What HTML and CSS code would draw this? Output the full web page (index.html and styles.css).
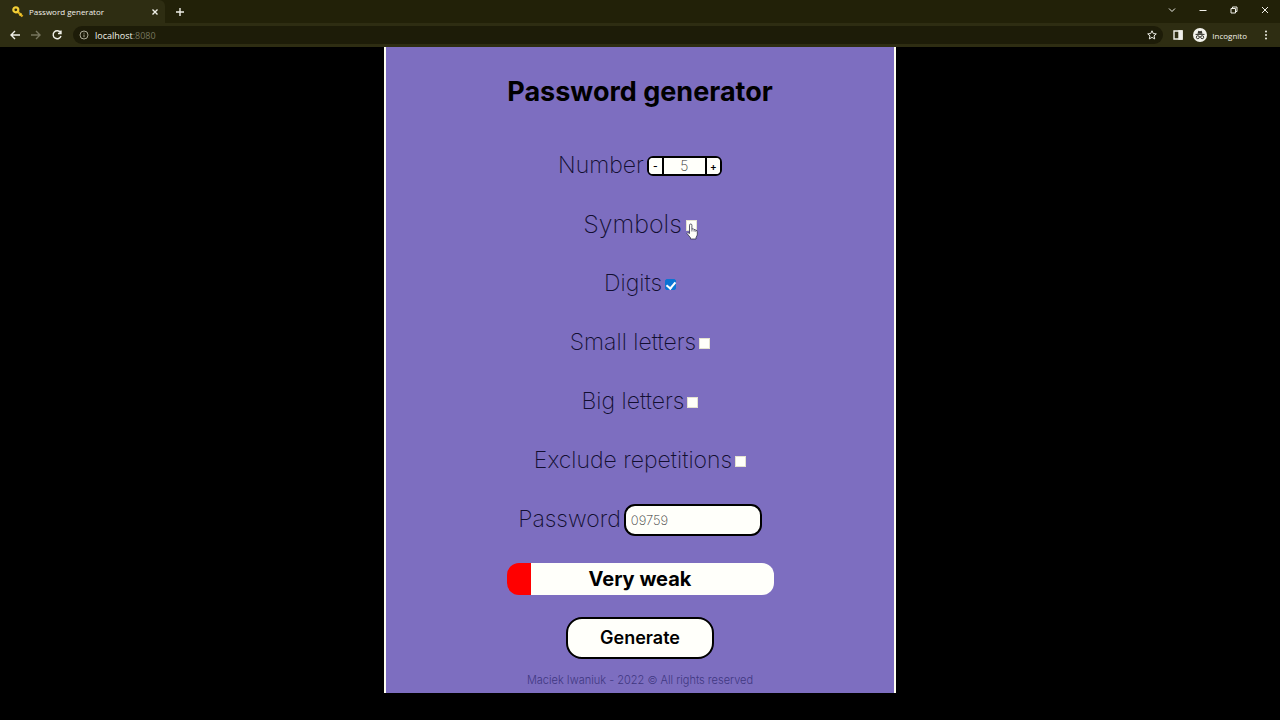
FILE: index.html
```html
<!DOCTYPE html>
<html lang="en">
<head>
<meta charset="utf-8">
<title>Password generator</title>
<link rel="stylesheet" href="styles.css">
</head>
<body>
<header class="browser">
  <div class="tab-strip">
    <div class="tab">
      <svg class="key" viewBox="0 0 14 14" width="14" height="14" aria-hidden="true"><path d="M6 6l5.500 5.500" stroke="#d9a91c" stroke-width="2.4"/><path d="M8.500 10.500l2-2" stroke="#f3d338" stroke-width="1.2"/><circle cx="4.800" cy="4.800" r="2.500" fill="none" stroke="#f3cf36" stroke-width="2.200"/></svg>
      <span class="tab-title">Password generator</span>
      <button class="icon-button" type="button" aria-label="Close tab"><svg viewBox="0 0 10 10" width="10" height="10"><path d="M2.500 2.500l5 5M7.500 2.500l-5 5"/></svg></button>
    </div>
    <button class="icon-button new-tab" type="button" aria-label="New tab"><svg viewBox="0 0 10 10" width="10" height="10"><path d="M5 1v8M1 5h8"/></svg></button>
    <div class="window-controls">
      <button class="icon-button dim" type="button" aria-label="Search tabs"><svg viewBox="0 0 10 10" width="10" height="10"><path d="M2 3.500l3 3 3-3"/></svg></button>
      <button class="icon-button thin" type="button" aria-label="Minimize"><svg viewBox="0 0 10 10" width="10" height="10"><path d="M1.500 5.500h7"/></svg></button>
      <button class="icon-button thin" type="button" aria-label="Restore"><svg viewBox="0 0 10 10" width="10" height="10"><path d="M2 3.500h4.500V8H2zM3.500 3.500V2H8v4.500H6.500"/></svg></button>
      <button class="icon-button thin" type="button" aria-label="Close"><svg viewBox="0 0 10 10" width="10" height="10"><path d="M2 2l6 6M8 2L2 8"/></svg></button>
    </div>
  </div>
  <div class="toolbar">
    <button class="icon-button" type="button" aria-label="Back"><svg viewBox="0 0 12 12" width="12" height="12"><path d="M11 6H2M6 2L2 6l4 4"/></svg></button>
    <button class="icon-button faded" type="button" aria-label="Forward"><svg viewBox="0 0 12 12" width="12" height="12"><path d="M1 6h9M6 2l4 4-4 4"/></svg></button>
    <button class="icon-button" type="button" aria-label="Reload"><svg viewBox="0 0 12 12" width="12" height="12"><path d="M9.500 3.500A4 4 0 1 0 10 7M10 1.500v3H7"/></svg></button>
    <div class="address">
      <svg class="info" viewBox="0 0 10 10" width="10" height="10" aria-hidden="true"><circle cx="5" cy="5" r="4"/><path d="M5 4.500v2.700M5 2.700v1"/></svg>
      <span class="url">localhost<span class="port">:8080</span></span>
      <button class="icon-button star" type="button" aria-label="Bookmark"><svg viewBox="0 0 12 12" width="12" height="12"><path d="M6 1.800l1.300 2.800 3 .3-2.300 2 .7 3L6 8.400 3.300 9.900l.7-3-2.300-2 3-.3z"/></svg></button>
    </div>
    <button class="icon-button" type="button" aria-label="Side panel"><svg viewBox="0 0 12 12" width="12" height="12"><path d="M2 2h8v8H2z"/><path d="M7 2h3v8H7z" fill="#eee"/></svg></button>
    <div class="profile">
      <svg viewBox="0 0 14 14" width="14" height="14" aria-hidden="true"><circle cx="7" cy="7" r="7" fill="#f4f4ee"/><path d="M4.500 5.800l.8-3 1.700.4 1.700-.4.8 3z" fill="#34342c"/><path d="M2.500 6.400h9" stroke="#34342c"/><g fill="none" stroke="#34342c"><circle cx="4.800" cy="9.200" r="1.500"/><circle cx="9.200" cy="9.200" r="1.500"/><path d="M6.300 9q.7-.5 1.400 0"/></g></svg>
      <span>Incognito</span>
    </div>
    <button class="icon-button" type="button" aria-label="Menu"><svg viewBox="0 0 10 10" width="10" height="10"><g class="dots"><circle cx="5" cy="1.500" r="1"/><circle cx="5" cy="5" r="1"/><circle cx="5" cy="8.500" r="1"/></g></svg></button>
  </div>
</header>
<main class="panel">
  <h1 class="title">Password generator</h1>
  <form class="form">
    <div class="row">
      <label for="number">Number</label>
      <div class="stepper">
        <button type="button" aria-label="Decrease">-</button>
        <input id="number" type="text" inputmode="numeric" value="5">
        <button type="button" aria-label="Increase">+</button>
      </div>
    </div>
    <div class="row hovered">
      <label for="symbols">Symbols</label>
      <span class="check-wrap"><input class="check" id="symbols" type="checkbox">
        <svg class="pointer" viewBox="0 0 12 17" width="12" height="17" aria-hidden="true"><path d="M3.500 9V2.200a1.200 1.200 0 0 1 2.400 0V6q1.800-.8 2.200.6 1.400-.5 1.700.7 1.500-.2 1.500 1.200V12l-1.300 2.600V16H4.500v-1.200L1 10.500q.3-2 2.500 0z" fill="#fffffa" stroke="#34344a" stroke-width=".8"/><path d="M5.900 6v2.500M8.100 6.600v2M9.800 7.300v1.500" stroke="#34344a" stroke-width=".7"/></svg>
      </span>
    </div>
    <div class="row"><label for="digits">Digits</label><input class="check" id="digits" type="checkbox" checked></div>
    <div class="row"><label for="small">Small letters</label><input class="check" id="small" type="checkbox"></div>
    <div class="row"><label for="big">Big letters</label><input class="check" id="big" type="checkbox"></div>
    <div class="row"><label for="exclude">Exclude repetitions</label><input class="check" id="exclude" type="checkbox"></div>
    <div class="row"><label for="password">Password</label><input class="password" id="password" type="text" value="09759"></div>
    <div class="row"><div class="strength">Very weak</div></div>
    <div class="row"><button class="generate" type="button">Generate</button></div>
  </form>
  <footer class="footer">Maciek Iwaniuk - 2022 © All rights reserved</footer>
</main>
</body>
</html>
```
FILE: styles.css
```css
* { box-sizing: border-box; }
body {
  margin: 0;
  background: #000;
  color: #000;
  font-family: Inter, "Open Sans", sans-serif;
}
button, input { font-family: inherit; }

.browser {
  background: #2e2d12;
  color: #f2f2ea;
  font-family: "Open Sans", sans-serif;
  font-size: 8px;
}
.tab-strip { display: flex; align-items: center; height: 23px; background: #222108; }
.tab {
  display: flex;
  align-items: center;
  gap: 4px;
  width: 165px;
  height: 23px;
  padding: 0 5px 0 11px;
  background: #2e2d12;
  border-radius: 0 6px 0 0;
}
.tab-title { flex: 1; }
.icon-button {
  display: flex;
  align-items: center;
  justify-content: center;
  padding: 0;
  border: 0;
  background: none;
}
.icon-button svg, .info { fill: none; stroke: #f0f0e8; stroke-width: 1.4; }
.icon-button .dots { fill: #f0f0e8; stroke: none; }
.thin svg, .dim svg, .star svg, .info { stroke-width: 1; }
.faded svg { stroke: #77765e; }
.icon-button.star svg, .icon-button.thin svg, .icon-button.dim svg { stroke-width: 1; }
.info { stroke: #aaa996; }
.new-tab { margin-left: 10px; }
.window-controls { display: flex; gap: 21px; margin-left: auto; padding: 0 10px 4px 0; }
.toolbar { display: flex; align-items: center; gap: 9px; height: 24px; padding: 0 9px 0 9px; }
.address {
  display: flex;
  flex: 1;
  align-items: center;
  gap: 6px;
  height: 18px;
  margin-left: 1px;
  padding: 0 5px 0 6px;
  border-radius: 9px;
  background: #1d1c08;
  font-size: 9px;
}
.port { color: #77765e; }
.star { margin-left: auto; }
.profile { display: flex; align-items: center; gap: 5px; padding-right: 5px; }

.panel {
  display: flex;
  flex-direction: column;
  align-items: center;
  width: 40%;
  margin: 0 auto;
  padding-bottom: 5px;
  border: solid #fffff0;
  border-width: 0 2px;
  background: #7d6ec0;
}
.title { margin: 28px 0 27px; font-size: 27px; line-height: 34px; font-weight: 700; }
.form { display: flex; flex-direction: column; align-items: center; align-self: stretch; }
.row {
  display: flex;
  align-items: center;
  justify-content: center;
  gap: 3px;
  width: 100%;
  height: 59px;
  color: #120e30;
  font-size: 23px;
  font-weight: 200;
}
.row label { padding-bottom: 1px; }
.hovered { gap: 4px; font-size: 25px; }
.stepper {
  display: flex;
  height: 20px;
  border: 2px solid #000;
  border-radius: 6px;
  overflow: hidden;
  background: #fff;
}
.stepper button {
  width: 13px;
  padding: 0;
  border: 0;
  background: #fffffa;
  color: #000;
  font-size: 10px;
  font-weight: 600;
  line-height: 16px;
}
.stepper input {
  width: 45px;
  padding: 0;
  border: solid #000;
  border-width: 0 2px;
  background: #fffffa;
  color: #333;
  font-size: 14px;
  font-weight: 200;
  text-align: center;
}
.check {
  appearance: none;
  display: block;
  width: 11px;
  height: 11px;
  margin: 2px 0 0;
  border: 1px solid #e4e2d0;
  background: #fffffa;
}
.check:checked {
  border-color: #0b74d4;
  border-radius: 2px;
  background: #0b74d4;
}
.check:checked::before {
  content: "";
  display: block;
  width: 4px;
  height: 7px;
  margin: 0 auto;
  border: solid #fff;
  border-width: 0 2px 2px 0;
  transform: rotate(40deg);
}
.check-wrap { position: relative; }
.pointer { position: absolute; left: 0; top: 5px; }
.password {
  width: 138px;
  height: 32px;
  padding: 0 5px;
  border: 2px solid #000;
  border-radius: 11px;
  background: #fffffa;
  color: #333;
  font-size: 13px;
  font-weight: 200;
}
.strength {
  width: 267px;
  border-radius: 12px;
  background: linear-gradient(90deg, #f00 9%, #fffffa 9%);
  color: #000;
  font-size: 20px;
  font-weight: 700;
  line-height: 32px;
  text-align: center;
}
.generate {
  padding: 0 32px;
  border: 2px solid #000;
  border-radius: 16px;
  background: #fffffa;
  color: #000;
  font-size: 18px;
  font-weight: 600;
  line-height: 38px;
}
.footer { padding-top: 5px; color: #403780; font-size: 11px; line-height: 16px; font-weight: 300; }
```
